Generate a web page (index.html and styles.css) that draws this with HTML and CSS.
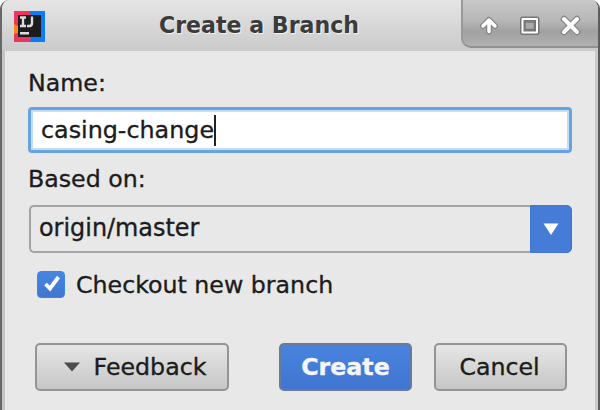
FILE: index.html
```html
<!DOCTYPE html>
<html lang="en">
<head>
<meta charset="utf-8">
<title>Create a Branch</title>
<link rel="stylesheet" href="styles.css">
</head>
<body>
<div class="window">
  <header class="titlebar">
    <svg class="logo" width="32" height="32" viewBox="0 0 32 32">
      <path fill="#087cfa" d="M1 1h31v31H1z"/>
      <path fill="#f5325f" d="M1 1h15l5 10L17 32H1z"/>
      <path fill="#f98a22" d="M1 14l5 3v8l-5-1z"/>
      <path fill="#e8365f" d="M1 24l7-2 8 6-2 4H1z"/>
      <path fill="#1c1c1c" d="M5 5h23v22H5z"/>
      <path fill="none" stroke="#ddd" stroke-width="2.400" d="M7 7.500h6M10 8v8M7 16h6M19 6.500v6.500q0 3-2.500 3H14"/>
      <path fill="#ddd" d="M7 22h9v2.500H7z"/>
    </svg>
    <h1 class="title">Create a Branch</h1>
    <div class="controls">
      <svg width="138" height="50" viewBox="0 0 138 50">
        <g fill="none" stroke-linejoin="round">
          <path stroke="#858585" stroke-width="6" stroke-linecap="round" d="M28 31.500V20M22 26l6-6 6 6"/>
          <path stroke="#fff" stroke-width="3.500" stroke-linecap="round" d="M28 31.500V20M22 26l6-6 6 6"/>
          <path stroke="#777" stroke-width="5" d="M61.500 19h14.500v13.500H61.500z"/>
          <path stroke="#fff" stroke-width="2" d="M61.500 19h14.500v13.500H61.500z"/>
          <path fill="#aaa" stroke="#777" stroke-width="1.500" d="M64 22h9.500v7.500h-9.500z"/>
          <path stroke="#858585" stroke-width="6.500" stroke-linecap="round" d="M103 19l13 13M116 19l-13 13"/>
          <path stroke="#fff" stroke-width="4" stroke-linecap="round" d="M103 19l13 13M116 19l-13 13"/>
        </g>
      </svg>
    </div>
  </header>
  <main class="content">
    <label class="label">Name:</label>
    <div class="field"><span class="text">casing-change</span><span class="caret"></span></div>
    <label class="label based">Based on:</label>
    <div class="combo">
      <span class="value">origin/master</span>
      <span class="drop"><svg width="16" height="12" viewBox="0 0 16 12"><path fill="#fff" d="M.5.5h15L8 12z"/></svg></span>
    </div>
    <div class="check">
      <span class="box"><svg width="26" height="26" viewBox="0 0 26 26"><path fill="none" stroke="#fff" stroke-width="3.800" d="M7.500 12l4.500 4.500L20.500 5"/></svg></span>
      <span class="caption">Checkout new branch</span>
    </div>
    <footer class="actions">
      <div class="button feedback"><svg width="16" height="10" viewBox="0 0 16 10"><path fill="#4d4d4d" d="M0 .5h16L8 9.500z"/></svg><span>Feedback</span></div>
      <div class="button primary">Create</div>
      <div class="button cancel">Cancel</div>
    </footer>
  </main>
</div>
</body>
</html>
```

FILE: styles.css
```css
* { box-sizing: border-box; }
body {
  margin: 0;
  background: #fff;
  font: 23.7px/28px "DejaVu Sans", sans-serif;
  color: #1c1c1c;
}
.window {
  height: 410px;
  overflow: hidden;
  border-left: 2px solid #686868;
  border-right: 2px solid #5c5c5c;
  border-radius: 9px 9px 0 0;
  background: #e8e8e8;
  box-shadow: inset 3px 0 #c4c4c4, inset -3px 0 #cacaca;
}
.titlebar {
  display: flex;
  height: 51px;
  padding-left: 11px;
  background: linear-gradient(#e5e5e5, #cacaca);
}
.logo { margin-top: 10px; }
.title {
  flex: 1;
  margin: 11px 0 0;
  padding-left: 114px;
  font-size: 22.1px;
  line-height: 28px;
  white-space: nowrap;
  color: #3b3b3b;
  text-shadow: 1px 1px 1px #f5f5f5;
}
.controls {
  width: 137px;
  height: 48px;
  overflow: hidden;
  border-left: 2px solid #999;
  border-bottom: 2px solid #919191;
  border-radius: 0 0 0 10px;
  background: linear-gradient(#c8c8c8, #b7b7b7 45%, #a1a1a1 68%, #b0b0b0);
}
.controls svg { display: block; margin-left: -2px; }
.content {
  padding: 18px 26px 0;
  -webkit-text-stroke: 0.35px currentColor;
}
.label { display: block; height: 38px; }
.field {
  display: flex;
  align-items: center;
  width: 544px;
  height: 46px;
  padding: 0 10px;
  border: 3px solid #67a3e1;
  border-radius: 4px;
  background: #fff;
  box-shadow: inset 0 0 0 2px #c3ddf5;
  font-size: 23.8px;
}
.caret { width: 2px; height: 31px; background: #222; }
.based { height: 40px; margin-top: 12px; }
.combo {
  display: flex;
  width: 543px;
  height: 48px;
  margin-left: 1px;
}
.value {
  flex: 1;
  padding: 7px 0 0 8px;
  border: 2px solid #a4a4a4;
  border-right: 0;
  border-radius: 5px 0 0 5px;
  font-size: 23.9px;
}
.drop {
  display: flex;
  align-items: center;
  justify-content: center;
  width: 42px;
  border: 1px solid #3e76d2;
  border-radius: 0 5px 5px 0;
  background: #467cd7;
}
.check { display: flex; align-items: center; height: 28px; margin: 17px 0 0 9px; }
.caption { padding-top: 2px; }
.box {
  width: 28px;
  height: 27px;
  margin-right: 11px;
  border: 1px solid #3b87e6;
  border-radius: 4px;
  background: linear-gradient(#4686e0, #4176cf);
}
.box svg { display: block; }
.actions { display: flex; margin: 45px 0 0 7px; }
.button {
  display: flex;
  align-items: center;
  justify-content: center;
  width: 133px;
  height: 48px;
  padding-bottom: 1px;
  border: 2px solid #949494;
  border-radius: 5px;
  background: linear-gradient(#e6e6e6, #c6c6c6);
}
.feedback { width: 194px; gap: 14px; margin-right: 50px; padding-left: 6px; }
.primary {
  margin-right: 22px;
  border-color: #687b9d;
  background: linear-gradient(#4883df, #4076d0);
  color: #f5f5f5;
  font-weight: bold;
}
.cancel { padding-right: 2px; }
```
